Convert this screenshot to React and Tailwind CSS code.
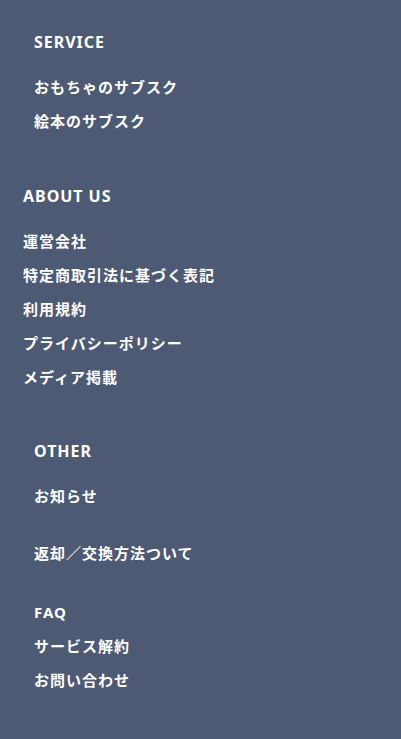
const sections = [
  {
    title: "SERVICE",
    indent: "pl-[34px]",
    gapBefore: "mt-[30px]",
    links: [{ label: "おもちゃのサブスク" }, { label: "絵本のサブスク" }],
  },
  {
    title: "ABOUT US",
    indent: "pl-[23px]",
    gapBefore: "mt-[46px]",
    links: [
      { label: "運営会社" },
      { label: "特定商取引法に基づく表記" },
      { label: "利用規約" },
      { label: "プライバシーポリシー" },
      { label: "メディア掲載" },
    ],
  },
  {
    title: "OTHER",
    indent: "pl-[34px]",
    gapBefore: "mt-[45px]",
    links: [
      { label: "お知らせ" },
      { label: "返却／交換方法ついて", spaced: "mt-[23px]" },
      { label: "FAQ", spaced: "mt-[25px]" },
      { label: "サービス解約" },
      { label: "お問い合わせ" },
    ],
  },
];

function FooterSection({ title, indent, gapBefore, links }) {
  return (
    <div className={`${indent} ${gapBefore}`}>
      <h3 className="h-6 leading-6 text-[16px] font-bold tracking-[0.06em] text-white">
        {title}
      </h3>
      <ul className="mt-4">
        {links.map((link) => (
          <li
            key={link.label}
            className={`h-[34px] flex items-center ${link.spaced || ""}`}
          >
            <a href="#" className="text-[15px] font-bold tracking-[1px] text-white">
              {link.label}
            </a>
          </li>
        ))}
      </ul>
    </div>
  );
}

export default function App() {
  return (
    <footer
      className="min-h-[739px] w-full bg-[#4e5a74] pb-10"
      style={{ fontFamily: '"Noto Sans", "Noto Sans CJK JP", sans-serif' }}
    >
      <nav className="flex flex-col">
        {sections.map((s) => (
          <FooterSection key={s.title} {...s} />
        ))}
      </nav>
    </footer>
  );
}
